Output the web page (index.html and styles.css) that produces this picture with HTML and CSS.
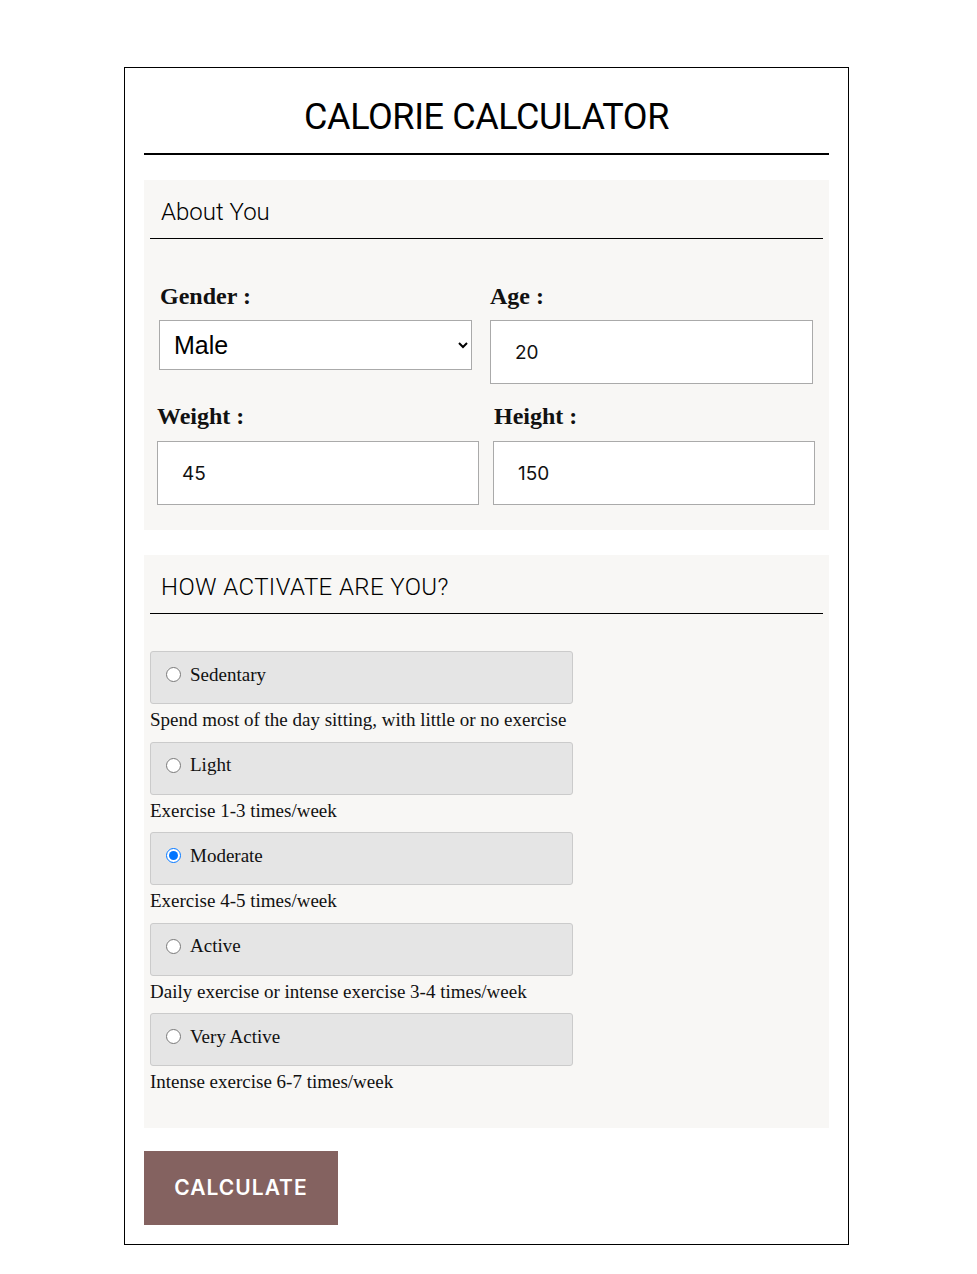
FILE: index.html
```html
<!DOCTYPE html>
<html lang="en">
<head>
<meta charset="utf-8">
<title>Calorie Calculator</title>
<link rel="stylesheet" href="styles.css">
</head>
<body>
<div class="calc">
  <h1 class="title">CALORIE CALCULATOR</h1>
  <div class="title-rule"></div>

  <section class="panel about">
    <h2 class="panel-head">About You</h2>
    <div class="fields">
      <div class="field f-gender">
        <label class="flabel" for="gender">Gender :</label>
        <select id="gender" class="select">
          <option>Male</option>
          <option>Female</option>
        </select>
      </div>
      <div class="field f-age">
        <label class="flabel" for="age">Age :</label>
        <input id="age" class="input" type="text" value="20">
      </div>
      <div class="field f-weight">
        <label class="flabel" for="weight">Weight :</label>
        <input id="weight" class="input" type="text" value="45">
      </div>
      <div class="field f-height">
        <label class="flabel" for="height">Height :</label>
        <input id="height" class="input" type="text" value="150">
      </div>
    </div>
  </section>

  <section class="panel activity">
    <h2 class="panel-head upper">HOW ACTIVATE ARE YOU?</h2>
    <div class="options">
      <label class="opt"><input type="radio" name="act"> <span>Sedentary</span></label>
      <p class="desc">Spend most of the day sitting, with little or no exercise</p>
      <label class="opt"><input type="radio" name="act"> <span>Light</span></label>
      <p class="desc">Exercise 1-3 times/week</p>
      <label class="opt"><input type="radio" name="act" checked> <span>Moderate</span></label>
      <p class="desc">Exercise 4-5 times/week</p>
      <label class="opt"><input type="radio" name="act"> <span>Active</span></label>
      <p class="desc">Daily exercise or intense exercise 3-4 times/week</p>
      <label class="opt"><input type="radio" name="act"> <span>Very Active</span></label>
      <p class="desc">Intense exercise 6-7 times/week</p>
    </div>
  </section>

  <button class="btn" type="button">CALCULATE</button>
</div>
</body>
</html>
```

FILE: styles.css
```css
* { box-sizing: border-box; }
html, body { margin: 0; padding: 0; background: #fff; }
body { font-family: "Liberation Serif", serif; color: #111; }

.calc {
  width: 725px;
  margin: 67px 0 0 124px;
  border: 1px solid #000;
  padding: 27px 19px 19px 19px;
}

.title {
  margin: 0;
  font-family: Roboto, "Liberation Sans", sans-serif;
  font-weight: 400;
  font-size: 36px;
  line-height: 44px;
  letter-spacing: -0.4px;
  text-align: center;
  color: #000;
}

.title-rule {
  height: 2px;
  background: #000;
  margin-top: 14px;
}

.panel {
  background: #f8f7f5;
  padding: 6px;
  margin-top: 25px;
}

.panel-head {
  margin: 0;
  padding: 12px 11px;
  font-family: Roboto, "Liberation Sans", sans-serif;
  font-weight: 300;
  font-size: 24px;
  line-height: 28px;
  color: #000;
  border-bottom: 1px solid #000;
}
.panel-head.upper { letter-spacing: 0.4px; }

.fields {
  display: grid;
  grid-template-columns: 336px 336px;
  padding-top: 42px;
  padding-bottom: 19px;
  row-gap: 17px;
  align-items: start;
}

.field { display: flex; flex-direction: column; }
.f-gender { margin-left: 9px; width: 313px; }
.f-age { margin-left: 4px; width: 323px; }
.f-weight { margin-left: 7px; width: 322px; }
.f-height { margin-left: 7px; width: 322px; }

.flabel {
  font-family: "Liberation Serif", serif;
  font-weight: 700;
  font-size: 24px;
  line-height: 30px;
  margin-bottom: 9px;
  color: #111;
}
.f-gender .flabel { margin-left: 1px; }
.f-weight .flabel, .f-height .flabel { margin-bottom: 10px; }
.f-height .flabel { margin-left: 1px; }

.select {
  height: 50px;
  border: 1px solid #aaa;
  border-radius: 0;
  background: #fff;
  font-family: "Liberation Sans", Arial, sans-serif;
  font-size: 25px;
  padding: 0 8px 0 10px;
  color: #000;
}

.input {
  height: 64px;
  border: 1px solid #aaa;
  background: #fff;
  padding: 0 24px;
  font-family: Inter, Roboto, sans-serif;
  font-size: 19px;
  color: #111;
  outline: none;
}

.options {
  padding-top: 37px;
  padding-bottom: 18px;
}

.opt {
  display: flex;
  align-items: center;
  width: 423px;
  height: 53px;
  background: #e5e5e5;
  border: 1px solid #cbcbcb;
  border-radius: 3px;
  padding: 0 0 6px 15px;
  font-family: "Liberation Serif", serif;
  font-size: 19px;
  color: #111;
}
.opt input {
  margin: 0 9px 0 0;
  width: 15px;
  height: 15px;
}

.desc {
  margin: 4px 0 9.5px 0;
  font-family: "Liberation Serif", serif;
  font-size: 19px;
  line-height: 24px;
  color: #111;
}

.btn {
  display: block;
  margin-top: 23px;
  width: 194px;
  height: 74px;
  border: 0;
  background: #846260;
  color: #fff;
  font-family: Inter, Roboto, sans-serif;
  font-weight: 600;
  font-size: 21px;
  letter-spacing: 1px;
  padding: 0;
}
```
